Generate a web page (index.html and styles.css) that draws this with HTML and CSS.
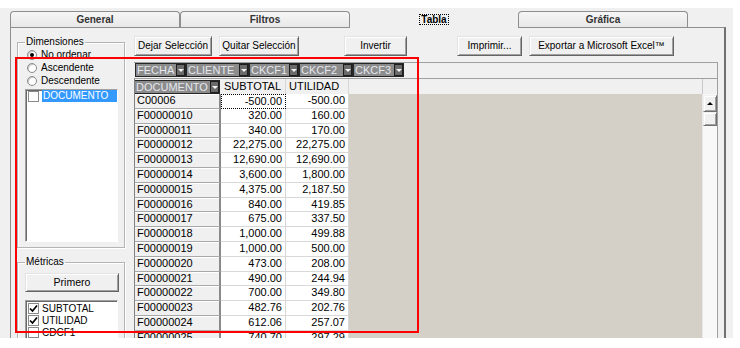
FILE: index.html
```html
<!DOCTYPE html>
<html lang="es">
<head>
<meta charset="utf-8">
<title>Tabla</title>
<link rel="stylesheet" href="styles.css">
</head>
<body>

<div class="window">

    <div class="tabs">
        <div class="tab">General</div>
        <div class="tab">Filtros</div>
        <div class="tab active"><span class="focus">Tabla</span></div>
        <div class="tab">Gráfica</div>
    </div>

    <div class="panel">

        <!-- left column: dimensions and metrics -->
        <div class="side">
            <fieldset class="group dims">
                <legend>Dimensiones</legend>
                <div class="radio"><span class="dot checked"></span>No ordenar</div>
                <div class="radio"><span class="dot"></span>Ascendente</div>
                <div class="radio"><span class="dot"></span>Descendente</div>
                <div class="list dimlist">
                    <div class="item"><span class="check"></span><span class="sel">DOCUMENTO</span></div>
                </div>
            </fieldset>

            <fieldset class="group metrics">
                <legend>Métricas</legend>
                <div class="btn first">Primero</div>
                <div class="list metlist">
                    <div class="item"><span class="check"><svg width="9" height="9" viewBox="0 0 9 9"><path d="M1 4.5 L3.5 7 L8 1.5" fill="none" stroke="#000" stroke-width="1.7"/></svg></span>SUBTOTAL</div>
                    <div class="item"><span class="check"><svg width="9" height="9" viewBox="0 0 9 9"><path d="M1 4.5 L3.5 7 L8 1.5" fill="none" stroke="#000" stroke-width="1.7"/></svg></span>UTILIDAD</div>
                    <div class="item"><span class="check"></span>CDCF1</div>
                </div>
            </fieldset>
        </div>

        <!-- right column: toolbar and pivot grid -->
        <div class="main">
            <div class="toolbar">
                <div class="btn b-dejar">Dejar Selección</div>
                <div class="btn b-quitar">Quitar Selección</div>
                <div class="btn b-invertir">Invertir</div>
                <div class="btn b-imprimir">Imprimir...</div>
                <div class="btn b-excel">Exportar a Microsoft Excel™</div>
            </div>

            <div class="grid">
                <div class="pivot">
                    <div class="fields">
                        <div class="field w-fecha"><span class="name">FECHA</span><span class="arrow"></span></div>
                        <div class="field w-cliente"><span class="name">CLIENTE</span><span class="arrow"></span></div>
                        <div class="field w-ck1"><span class="name">CKCF1</span><span class="arrow"></span></div>
                        <div class="field w-ck2"><span class="name">CKCF2</span><span class="arrow"></span></div>
                        <div class="field w-ck3"><span class="name">CKCF3</span><span class="arrow"></span></div>
                    </div>
                </div>

                <div class="cells">
                    <div class="fill"></div>
                    <div class="scroll">
                        <div class="sbtn"><span class="up"></span></div>
                        <div class="sbtn thumb"></div>
                    </div>

                    <div class="hlabel"><div class="fields"><div class="field w-doc"><span class="name">DOCUMENTO</span><span class="arrow"></span></div></div></div>
                    <div class="hcell">SUBTOTAL</div>
                    <div class="hcell">UTILIDAD</div>
                    <div class="hblank"></div>
                    <div class="hcorner"></div>

                    <div class="lab">C00006</div><div class="val focused">-500.00</div><div class="val">-500.00</div>
                    <div class="lab">F00000010</div><div class="val">320.00</div><div class="val">160.00</div>
                    <div class="lab">F00000011</div><div class="val">340.00</div><div class="val">170.00</div>
                    <div class="lab">F00000012</div><div class="val">22,275.00</div><div class="val">22,275.00</div>
                    <div class="lab">F00000013</div><div class="val">12,690.00</div><div class="val">12,690.00</div>
                    <div class="lab">F00000014</div><div class="val">3,600.00</div><div class="val">1,800.00</div>
                    <div class="lab">F00000015</div><div class="val">4,375.00</div><div class="val">2,187.50</div>
                    <div class="lab">F00000016</div><div class="val">840.00</div><div class="val">419.85</div>
                    <div class="lab">F00000017</div><div class="val">675.00</div><div class="val">337.50</div>
                    <div class="lab">F00000018</div><div class="val">1,000.00</div><div class="val">499.88</div>
                    <div class="lab">F00000019</div><div class="val">1,000.00</div><div class="val">500.00</div>
                    <div class="lab">F00000020</div><div class="val">473.00</div><div class="val">208.00</div>
                    <div class="lab">F00000021</div><div class="val">490.00</div><div class="val">244.94</div>
                    <div class="lab">F00000022</div><div class="val">700.00</div><div class="val">349.80</div>
                    <div class="lab">F00000023</div><div class="val">482.76</div><div class="val">202.76</div>
                    <div class="lab">F00000024</div><div class="val">612.06</div><div class="val">257.07</div>
                    <div class="lab">F00000025</div><div class="val">740.70</div><div class="val">297.29</div>
                </div>
            </div>
        </div>

    </div>

    <div class="highlight"></div>

</div>

</body>
</html>
```

FILE: styles.css
```css
*
{
    box-sizing: border-box;
}

body
{
    margin:      0;
    background:  #ffffff;
    font-family: "Liberation Sans", Arial, sans-serif;
    font-size:   10px;
    color:       #000000;
}

.window
{
    position:   relative;
    width:      733px;
    height:     330px;
    margin-top: 8px;
    background: #f0f0f0;
    overflow:   hidden;
}

/* tab strip */

.tabs
{
    display:      flex;
    align-items:  flex-end;
    height:       19px;
    padding-left: 10px;
}

.tab
{
    width:         170px;
    height:        16px;
    border:        1px solid #8e8e8e;
    border-bottom: none;
    border-radius: 4px 4px 0 0;
    background:    linear-gradient(#f6f6f6, #e8e8e8);
    color:         #333333;
    font-weight:   bold;
    text-align:    center;
    line-height:   15px;
}

.tab.active
{
    position:      relative;
    z-index:       1;
    width:         168px;
    height:        20px;
    margin-bottom: -1px;
    padding-top:   4px;
    border:        none;
    background:    #f0f0f0;
}

.focus
{
    display:     inline-block;
    padding:     0 1px;
    border:      1px dotted #000000;
    line-height: 9px;
    color:       #000000;
}

.panel
{
    display:      flex;
    width:        716px;
    height:       330px;
    margin-left:  10px;
    padding:      8px 0 0 6px;
    border:       1px solid #8e8e8e;
    border-right: 2px solid #707070;
    background:   #f0f0f0;
}

/* left column */

.side
{
    display:        flex;
    flex-direction: column;
    width:          108px;
    flex-shrink:    0;
}

.group
{
    margin:     0;
    min-width:  0;
    padding:    0 6px 5px 7px;
    border:     1px solid #b4b4b4;
    box-shadow: inset 1px 1px 0 #ffffff, 1px 1px 0 #ffffff;
}

.group legend
{
    padding:     0 1px;
    line-height: 12px;
}

.metrics
{
    margin-top:  8px;
    padding-top: 5px;
}

.radio
{
    display:      flex;
    align-items:  center;
    height:       13px;
    padding-left: 2px;
}

.dot
{
    position:      relative;
    width:         10px;
    height:        10px;
    margin-right:  4px;
    border:        1px solid #8a8a8a;
    border-radius: 50%;
    background:    #ffffff;
    box-shadow:    inset 1px 1px 0 #c8c8c8;
}

.dot.checked::after
{
    content:       "";
    position:      absolute;
    left:          2px;
    top:           2px;
    width:         4px;
    height:        4px;
    border-radius: 50%;
    background:    #000000;
}

.list
{
    border:       1px solid;
    border-color: #a0a0a0 #ffffff #ffffff #a0a0a0;
    box-shadow:   inset 1px 1px 0 #696969;
    background:   #ffffff;
}

.dimlist
{
    height:     153px;
    margin-top: 2px;
}

.metlist
{
    height:     60px;
    margin-top: 8px;
}

.item
{
    display:      flex;
    align-items:  center;
    height:       12px;
    padding-left: 2px;
}

.check
{
    display:         flex;
    align-items:     center;
    justify-content: center;
    width:           11px;
    height:          11px;
    margin-right:    3px;
    border:          1px solid #8a8a8a;
    background:      #ffffff;
}

.sel
{
    flex:         1;
    height:       12px;
    padding-left: 1px;
    background:   #3399ff;
    color:        #ffffff;
    line-height:  12px;
}

.metlist .item:first-child
{
    margin-top: 1px;
}

/* buttons */

.btn
{
    height:       20px;
    border:       1px solid;
    border-color: #e3e3e3 #646464 #646464 #e3e3e3;
    box-shadow:   inset 1px 1px 0 #ffffff, inset -1px -1px 0 #a0a0a0;
    background:   #f0f0f0;
    text-align:   center;
    line-height:  18px;
    white-space:  nowrap;
}

.first
{
    width:       94px;
    height:      19px;
    font-size:   10.5px;
    line-height: 17px;
}

/* right column */

.main
{
    width:       584px;
    margin-left: 9px;
    flex-shrink: 0;
}

.toolbar
{
    display: flex;
}

.b-dejar    { width: 78px; }
.b-quitar   { width: 80px;  margin-left: 7px; }
.b-invertir { width: 63px;  margin-left: 45px; }
.b-imprimir { width: 65px;  margin-left: 50px; }
.b-excel    { width: 145px; margin-left: 7px; }

.grid
{
    margin-top:   6px;
    border-top:   1px solid #a0a0a0;
    border-right: 1px solid #a0a0a0;
}

.pivot
{
    height:        16px;
    padding-left:  1px;
    border-bottom: 1px solid #a0a0a0;
}

.fields
{
    display:    inline-flex;
    gap:        2px;
    height:     14px;
    padding:    1px;
    background: #262626;
}

.field
{
    display:      flex;
    align-items:  center;
    flex-shrink:  0;
    height:       12px;
    padding-left: 1px;
    background:   #8c8c8c;
    color:        #e4e8ee;
    font-size:    11px;
    line-height:  12px;
    white-space:  nowrap;
}

.name
{
    flex:     1;
    overflow: hidden;
}

.arrow
{
    position:    relative;
    flex-shrink: 0;
    width:       9px;
    height:      12px;
    border:      1px solid #1e1e1e;
    background:  #6a6a6a;
}

.arrow::after
{
    content:      "";
    position:     absolute;
    left:         1px;
    top:          4px;
    border-left:  3px solid transparent;
    border-right: 3px solid transparent;
    border-top:   3px solid #f4f4f4;
}

.w-fecha   { width: 49px; }
.w-cliente { width: 61px; }
.w-ck1     { width: 48px; }
.w-ck2     { width: 52px; }
.w-ck3     { width: 49px; }
.w-doc     { width: 84px; }

/* pivot cells */

.cells
{
    display:               grid;
    grid-template-columns: 87px 65px 63px 353px 15px;
    grid-template-rows:    15px repeat(17, 14.8px);
    font-size:             11px;
}

.fill
{
    grid-column: 4;
    grid-row:    2 / span 17;
    background:  #d4d0c8;
}

.scroll
{
    grid-column: 5;
    grid-row:    2 / span 17;
    border-left: 1px solid #e8e8e8;
    background:  #f8f8f8;
    padding-top: 1px;
}

.sbtn
{
    display:         flex;
    align-items:     center;
    justify-content: center;
    height:          17px;
    border:          1px solid;
    border-color:    #f0f0f0 #707070 #707070 #f0f0f0;
    box-shadow:      inset 1px 1px 0 #ffffff, inset -1px -1px 0 #a0a0a0;
    background:      #f0f0f0;
}

.sbtn.thumb
{
    height: 14px;
}

.up
{
    border-left:   3px solid transparent;
    border-right:  3px solid transparent;
    border-bottom: 3px solid #000000;
}

.hlabel
{
    padding:     1px 0 0 0;
    background:  #f0f0f0;
    border-left: 1px solid #808080;
}

.hlabel .fields
{
    padding: 1px 1px 1px 0;
}

.hcell
{
    padding-left: 3px;
    border-right: 1px solid #d8d8d8;
    background:   #f0f0f0;
    line-height:  15px;
}

.hblank
{
    background: #f0f0f0;
}

.hcorner
{
    border-left: 1px solid #c8c8c8;
    background:  #f0f0f0;
}

.lab
{
    padding-left:  2px;
    border-left:   1px solid #808080;
    border-right:  2px solid #8a8a8a;
    border-bottom: 1px solid #a8a8a8;
    box-shadow:    inset 0 1px 0 #ffffff;
    background:    #f0f0f0;
    line-height:   13.8px;
    white-space:   nowrap;
}

.val
{
    padding-right: 3px;
    border-right:  1px solid #d8d8d8;
    border-bottom: 1px solid #d8d8d8;
    background:    #ffffff;
    text-align:    right;
    line-height:   13.8px;
}

.val.focused
{
    border:      1px dotted #000000;
    line-height: 12.8px;
}

/* red marker drawn over the screenshot */

.highlight
{
    position:       absolute;
    left:           15px;
    top:            49px;
    width:          404px;
    height:         276px;
    z-index:        5;
    border:         2px solid #ff0000;
    pointer-events: none;
}
```
